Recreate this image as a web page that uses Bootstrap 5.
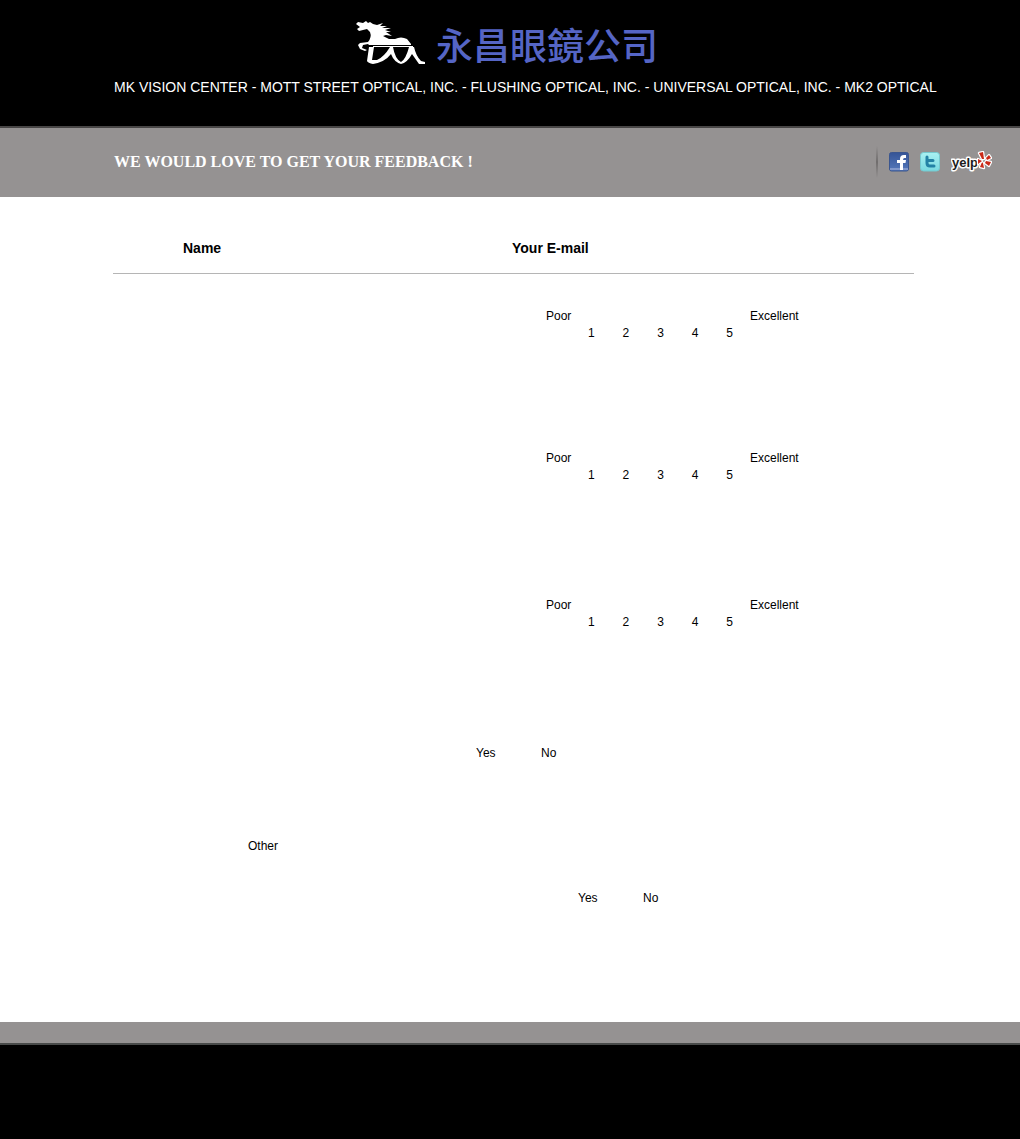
<!DOCTYPE html>
<html lang="en">
<head>
<meta charset="utf-8">
<meta name="viewport" content="width=device-width, initial-scale=1">
<title>MK Vision Center - Feedback</title>
<link href="https://cdn.jsdelivr.net/npm/bootstrap@5.3.0/dist/css/bootstrap.min.css" rel="stylesheet">
<style>
  body { font-family: "Liberation Sans", Arial, sans-serif; font-size: 12px; line-height: 17px; color: #000; background: #000; }
  .site-head { background: #000; padding: 18px 0 27px; }
  .logo-link { gap: 8px; padding-left: 355px; height: 57px; }
  .logo-name { font-family: "Noto Sans CJK SC", sans-serif; font-size: 37px; line-height: 52px; font-weight: 500; color: #5565c5; }
  .stores { padding-left: 114px; font-size: 14px; line-height: 24px; height: 24px; color: #fff; white-space: nowrap; }
  .title-band { background: #959292; border-top: 2px solid #484646; height: 71px; padding: 0 28px 2px 114px; }
  .title-band h1 { font-family: "Liberation Serif", "Times New Roman", serif; font-size: 16px; line-height: 18px; color: #fff; }
  .social { gap: 11px; }
  .social a, .social svg { display: block; }
  .divider { width: 2px; height: 32px; background: linear-gradient(#959292, #706d6d, #959292); }
  .survey { background: #fff; height: 825px; padding: 40px 0 0 113px; }
  .survey-body { max-width: 801px; }
  .contact { font-size: 14px; line-height: 22px; border-bottom: 1px solid #b5b5b5; padding: 0 0 14px 70px; margin-bottom: 34px; }
  .contact div { flex: 0 0 329px; }
  .rating { padding-left: 433px; height: 34px; }
  .poor-label { width: 42px; }
  .scores { width: 145px; padding-top: 17px; margin-right: 17px; }
  .gap-a { margin-bottom: 108px; }
  .gap-b { margin-bottom: 113px; }
  .gap-c { margin-bottom: 114px; }
  .answer div { width: 65px; }
  .visit { padding-left: 363px; margin-bottom: 76px; }
  .other { padding-left: 135px; margin-bottom: 35px; }
  .again { padding-left: 465px; }
  .foot-band { background: #959292; height: 23px; border-bottom: 2px solid #484a49; }
  .site-foot { height: 94px; background: #000; }
</style>
<script src="https://cdn.jsdelivr.net/npm/bootstrap@5.3.0/dist/js/bootstrap.bundle.min.js" defer></script>
</head>
<body>
<header>
  <div class="site-head">
    <a href="#" class="logo-link d-flex align-items-start text-decoration-none">
      <svg width="73" height="52" viewBox="0 -2 73 52" aria-hidden="true">
        <path fill="#fff" d="M1 4 3 2 8 3 11 1 13 3 15 2 18 4 22 5 28 3 25 6 32 6 27 8 36 8 30 10 36 12 31 12 37 16 31 15 28 16 34 19 40 19Q46 16 52 19L56 24V25H14L13 24 8 25 7 28 12 30 10 31 5 29 3 25 5 23 13 22Q17 17 15 12L12 9 8 10 4 11 2 9 5 7Z"/>
        <path fill="#fff" d="M14 27H19L17 40 22 40Q29 37 35 27H38Q40 39 46 42 51 39 54 27H59Q61 36 66 41L70 42 70 44 64 44 57 34Q52 43 46 44 39 42 36 34 30 42 18 44 13 43 12 41Z"/>
        <path fill="none" stroke="#fff" d="M18 26.500H58"/>
        <path stroke="#000" d="M15 25.500H54"/>
      </svg>
      <span class="logo-name" lang="zh">永昌眼鏡公司</span>
    </a>
    <div class="stores">MK VISION CENTER - MOTT STREET OPTICAL, INC. - FLUSHING OPTICAL, INC. - UNIVERSAL OPTICAL, INC. - MK2 OPTICAL</div>
  </div>
  <div class="title-band d-flex align-items-center justify-content-between">
    <h1 class="fw-bold m-0">WE WOULD LOVE TO GET YOUR FEEDBACK !</h1>
    <div class="social d-flex align-items-center">
      <span class="divider"></span>
      <a href="#" aria-label="Facebook">
        <svg width="20" height="20" viewBox="0 0 20 20"><defs><linearGradient id="fb" x2="0" y2="1"><stop stop-color="#355496"/><stop offset="1" stop-color="#5578bb"/></linearGradient></defs><rect x=".5" y=".5" width="19" height="18.500" rx="2" fill="url(#fb)" stroke="#3b568f"/><path fill="#8298cb" d="M1 16h18v2H1z"/><path fill="#fff" d="M11 18v-7H8V8h3V7q0-4 4-4h2v3h-1.500Q14 6 14 8h3l-.5 3H14v7z"/></svg>
      </a>
      <a href="#" aria-label="Twitter">
        <svg width="20" height="20" viewBox="0 0 20 20"><defs><linearGradient id="tw" x2="0" y2="1"><stop stop-color="#a9f1f2"/><stop offset="1" stop-color="#79d9e0"/></linearGradient></defs><rect x=".5" y=".5" width="19" height="18.500" rx="3" fill="url(#tw)" stroke="#75c9cf"/><path fill="none" stroke="#2382a5" stroke-width="3" stroke-linecap="round" stroke-linejoin="round" d="M7 5v6q0 3 3 3h4M7 8.500h6"/></svg>
      </a>
      <a href="#" aria-label="Yelp">
        <svg width="41" height="22" viewBox="0 0 41 22">
          <text x="1" y="16" font-family="Liberation Sans, Arial, sans-serif" font-size="13" font-weight="700" fill="#1c1c1c" stroke="#fff" stroke-width="3" stroke-linejoin="round" paint-order="stroke">yelp</text>
          <g fill="#c92a18" stroke="#fff" stroke-width="2.400" stroke-linejoin="round" paint-order="stroke"><path d="M28 2 32 1 33 8 31 8Z"/><path d="M35 7 38 4 40 7 36 9Z"/><path d="M35 10 40 11 38 15 34 12Z"/><path d="M32 12 33 17 29 16 31 11Z"/><path d="M27 8 31 10 27 13Z"/></g>
        </svg>
      </a>
    </div>
  </div>
</header>

<main class="survey">
  <div class="survey-body">
    <div class="contact d-flex fw-bold"><div>Name</div><div>Your E-mail</div></div>

    <div class="rating d-flex gap-a"><span class="poor-label">Poor</span><div class="scores d-flex justify-content-between"><span>1</span><span>2</span><span>3</span><span>4</span><span>5</span></div><span>Excellent</span></div>
    <div class="rating d-flex gap-b"><span class="poor-label">Poor</span><div class="scores d-flex justify-content-between"><span>1</span><span>2</span><span>3</span><span>4</span><span>5</span></div><span>Excellent</span></div>
    <div class="rating d-flex gap-c"><span class="poor-label">Poor</span><div class="scores d-flex justify-content-between"><span>1</span><span>2</span><span>3</span><span>4</span><span>5</span></div><span>Excellent</span></div>

    <div class="answer visit d-flex"><div>Yes</div><div>No</div></div>
    <div class="other">Other</div>
    <div class="answer again d-flex"><div>Yes</div><div>No</div></div>
  </div>
</main>

<footer>
  <div class="foot-band"></div>
  <div class="site-foot"></div>
</footer>
</body>
</html>
